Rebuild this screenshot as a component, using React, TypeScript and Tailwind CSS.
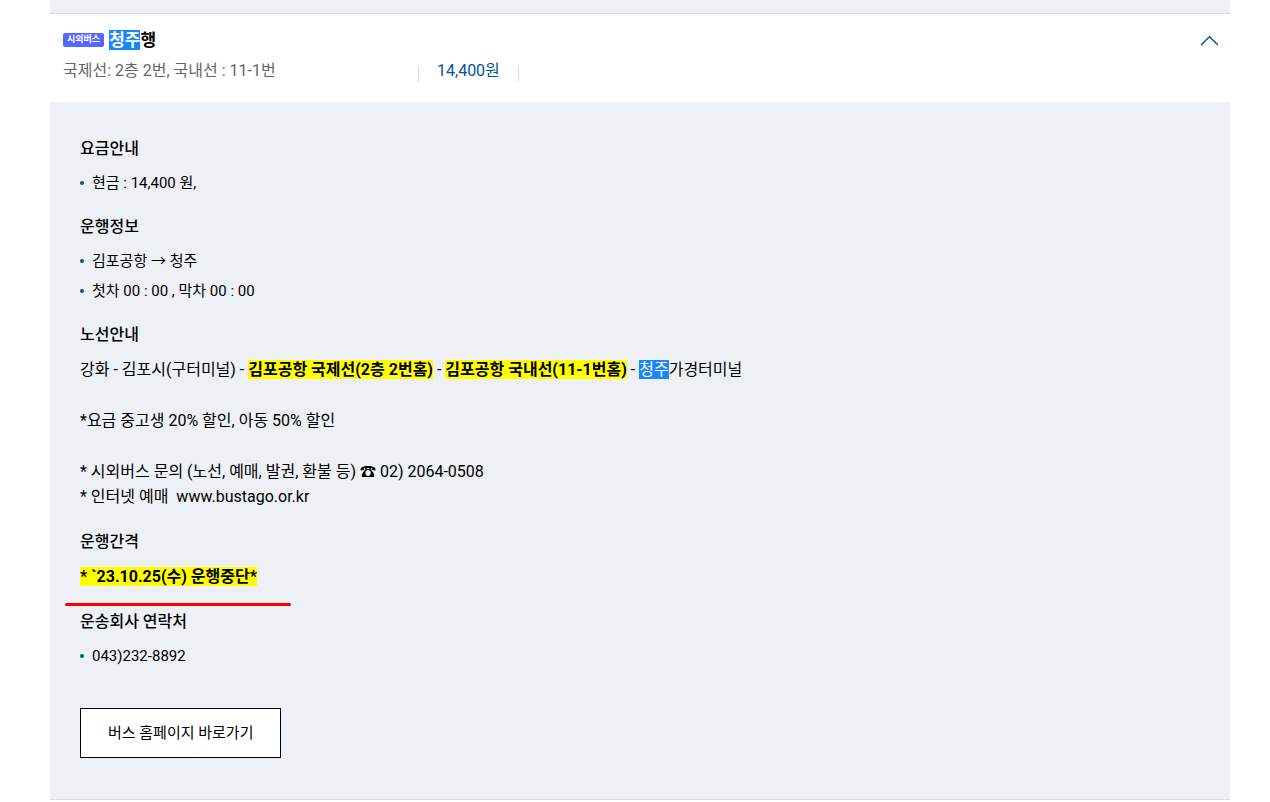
import { useState, type ReactNode } from "react";

const Found = ({ children }: { children: ReactNode }) => (
  <mark className="bg-[#1a85ff] text-white">{children}</mark>
);

const Notice = ({ children }: { children: ReactNode }) => (
  <strong className="bg-[#ffff00] font-bold">{children}</strong>
);

const Section = ({ title, children }: { title: string; children: ReactNode }) => (
  <section className="relative flex flex-col gap-[7px]">
    <h3 className="text-base leading-6 font-medium">{title}</h3>
    {children}
  </section>
);

const BulletList = ({ items }: { items: string[] }) => (
  <ul className="text-[15px]">
    {items.map((item) => (
      <li key={item} className="flex items-center gap-2 leading-[30px]">
        <span className="size-1 rounded-full bg-[#00549c]" />
        {item}
      </li>
    ))}
  </ul>
);

const RouteHeader = ({ open, onToggle }: { open: boolean; onToggle: () => void }) => (
  <header className="flex items-start justify-between border-t border-[#d8dbe0] bg-white pt-3 pr-3 pb-5 pl-[13px]">
    <div>
      <div className="flex h-7 items-center gap-[5px]">
        <span className="flex h-[14px] items-center rounded-xs bg-[#5468ff] px-1 text-[9px] font-bold text-white">
          시외버스
        </span>
        <h2 className="text-[17px] leading-7 font-bold">
          <Found>청주</Found>행
        </h2>
      </div>
      <div className="mt-1 flex items-end text-base leading-[26px] -mb-[2px]">
        <span className="w-[355px] text-[#666]">국제선: 2층 2번, 국내선 : 11-1번</span>
        <span className="mb-[2px] h-4 w-px bg-[#ddd]" />
        <span className="px-[18px] text-[#00549c]">14,400원</span>
        <span className="mb-[2px] h-4 w-px bg-[#ddd]" />
      </div>
    </div>
    <button
      type="button"
      aria-label="청주행"
      aria-expanded={open}
      onClick={onToggle}
      className="mt-[9px] cursor-pointer"
    >
      <svg
        width="18"
        height="12"
        viewBox="0 0 18 12"
        fill="none"
        stroke="#00549c"
        strokeWidth="1.5"
        className={open ? "" : "rotate-180"}
      >
        <path d="M1 10 9.5 1.8 18 10" />
      </svg>
    </button>
  </header>
);

export default function App() {
  const [open, setOpen] = useState(true);

  return (
    <main className="pr-10 pl-[50px] font-[Roboto,'Noto_Sans_CJK_KR',sans-serif] text-base text-black">
      <div className="h-[13px] bg-[#edf0f5]" />
      <article>
        <RouteHeader open={open} onToggle={() => setOpen(!open)} />
        {open && (
          <div className="border-b border-[#d8dbe0] bg-[#edf0f5] px-[30px] pt-[35px] pb-[41px]">
            <div className="flex flex-col gap-[17px]">
              <Section title="요금안내">
                <BulletList items={["현금 : 14,400 원,"]} />
              </Section>
              <Section title="운행정보">
                <BulletList items={["김포공항 → 청주", "첫차 00 : 00 , 막차 00 : 00"]} />
              </Section>
              <Section title="노선안내">
                <div className="flex flex-col gap-[26px] pt-[3px] pb-1 leading-[25px]">
                  <p>
                    강화 - 김포시(구터미널) - <Notice>김포공항 국제선(2층 2번홈)</Notice> -{" "}
                    <Notice>김포공항 국내선(11-1번홈)</Notice> - <Found>청주</Found>가경터미널
                  </p>
                  <p>*요금 중고생 20% 할인, 아동 50% 할인</p>
                  <p>
                    * 시외버스 문의 (노선, 예매, 발권, 환불 등) ☎ 02) 2064-0508
                    <br />* 인터넷 예매&nbsp; www.bustago.or.kr
                  </p>
                </div>
              </Section>
              <Section title="운행간격">
                <p className="pt-[3px] pb-1 leading-[25px]">
                  <Notice>* `23.10.25(수) 운행중단*</Notice>
                </p>
                <svg
                  className="absolute -bottom-[14px] -left-4"
                  width="228"
                  height="5"
                  viewBox="0 0 228 5"
                  aria-hidden="true"
                >
                  <path d="M2.5 2.5H225.5" stroke="#ff0000" strokeWidth="3" strokeLinecap="round" />
                </svg>
              </Section>
              <Section title="운송회사 연락처">
                <BulletList items={["043)232-8892"]} />
              </Section>
            </div>
            <a
              href="#"
              className="mt-[37px] inline-flex h-[50px] items-center border border-black bg-white px-[27px] align-top text-[15px]"
            >
              버스 홈페이지 바로가기
            </a>
          </div>
        )}
      </article>
    </main>
  );
}
